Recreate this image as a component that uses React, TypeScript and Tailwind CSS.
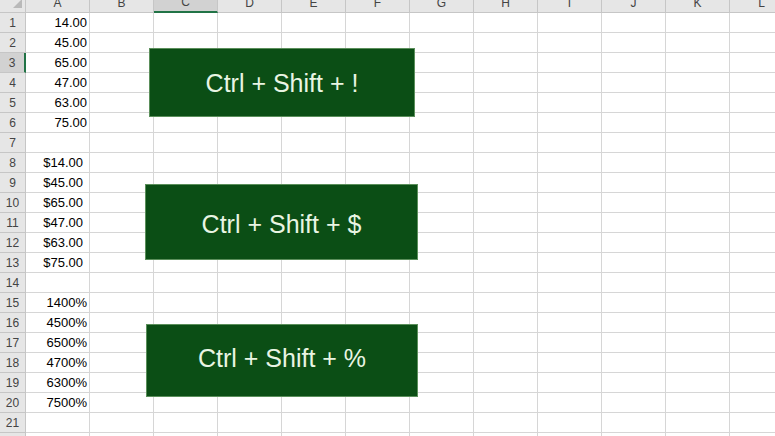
import React from "react";

const cols = ["A", "B", "C", "D", "E", "F", "G", "H", "I", "J", "K", "L"];

const colA: Record<number, string> = {
  1: "14.00",
  2: "45.00",
  3: "65.00",
  4: "47.00",
  5: "63.00",
  6: "75.00",
  8: "$14.00",
  9: "$45.00",
  10: "$65.00",
  11: "$47.00",
  12: "$63.00",
  13: "$75.00",
  15: "1400%",
  16: "4500%",
  17: "6500%",
  18: "4700%",
  19: "6300%",
  20: "7500%",
};

const rows = Array.from({ length: 22 }, (_, i) => i + 1);

const ShortcutBox = ({ label, className }: { label: string; className: string }) => (
  <div
    className={`absolute flex items-center justify-center bg-[#0b4e15] border border-[#5b8f5b] text-[#e9f5e3] text-[25px] ${className}`}
    style={{ fontFamily: "Arial, 'Liberation Sans', sans-serif" }}
  >
    {label}
  </div>
);

export default function App() {
  return (
    <div
      className="relative w-[775px] h-[436px] overflow-hidden bg-white"
      style={{ fontFamily: "'Liberation Sans', Arial, sans-serif" }}
    >
      {/* column headers, top is cut off */}
      <div className="flex h-[13px] overflow-hidden">
        <div className="w-[26px] shrink-0 h-full bg-[#e6e6e6] border-r border-b border-[#c6c6c6] relative">
          <svg width="26" height="13" className="absolute left-0 top-0">
            <polygon points="22,0 22,9 13,9" fill="#b9b9b9" transform="translate(0,-1)" />
          </svg>
        </div>
        {cols.map((c) => (
          <div
            key={c}
            className={`w-[64px] shrink-0 h-full flex items-end justify-center border-r text-[12px] text-[#444] leading-[19px] ${
              c === "C"
                ? "bg-[#d2d2d2] border-b-2 border-b-[#217346] border-r-[#c6c6c6]"
                : "bg-[#e6e6e6] border-b border-[#c6c6c6]"
            }`}
          >
            <span className="-mb-[1px]">{c}</span>
          </div>
        ))}
      </div>

      {rows.map((r) => (
        <div key={r} className="flex h-[20px]">
          <div
            className={`w-[26px] shrink-0 h-full flex items-center justify-center pt-[1px] border-b border-[#c6c6c6] text-[12px] text-[#444] ${
              r === 3
                ? "bg-[#d2d2d2] border-r-2 border-r-[#217346]"
                : "bg-[#e6e6e6] border-r border-r-[#c6c6c6]"
            }`}
          >
            {r}
          </div>
          {cols.map((c) => (
            <div
              key={c}
              className={`w-[64px] shrink-0 h-full flex items-center justify-end pt-[1px] border-r border-b border-[#d6d6d6] text-[13px] text-black ${
                c === "A" && r >= 8 && r <= 13 ? "pr-[6px]" : "pr-[2px]"
              }`}
            >
              {c === "A" ? colA[r] ?? "" : ""}
            </div>
          ))}
        </div>
      ))}

      <ShortcutBox label="Ctrl + Shift + !" className="left-[149px] top-[48px] w-[266px] h-[69px] pt-[2px]" />
      <ShortcutBox label="Ctrl + Shift + $" className="left-[145px] top-[184px] w-[273px] h-[76px] pt-[5px]" />
      <ShortcutBox label="Ctrl + Shift + %" className="left-[146px] top-[324px] w-[272px] h-[73px] pb-[4px]" />
    </div>
  );
}
